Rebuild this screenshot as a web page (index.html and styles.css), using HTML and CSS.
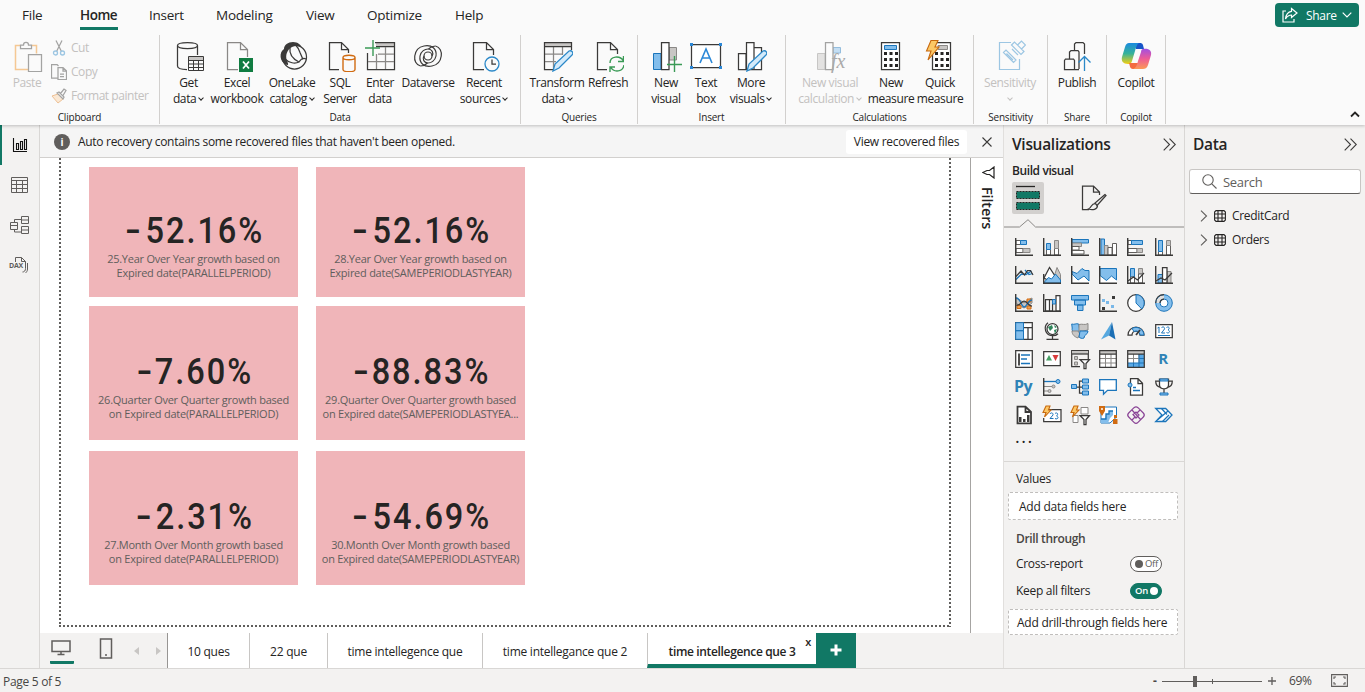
FILE: index.html
```html
<!DOCTYPE html>
<html lang="en">
<head>
<meta charset="utf-8">
<title>Report editor</title>
<link rel="stylesheet" href="styles.css">
</head>
<body>
<div class="app">
<header class="top">
  <nav class="menu">
    <span class="menu-item m-file">File</span>
    <span class="menu-item m-home active">Home</span>
    <span class="menu-item m-insert">Insert</span>
    <span class="menu-item m-model">Modeling</span>
    <span class="menu-item m-view">View</span>
    <span class="menu-item m-opt">Optimize</span>
    <span class="menu-item m-help">Help</span>
    <button class="share"><svg width="16" height="16" viewBox="0 0 16 16"><path d="M4 4H1v11h11v-3M9.500 1.500l5.500 4.500-5.500 4.500V8C6.500 8 5 9.500 3.500 12 4 7.500 6 4.700 9.500 4.300z"/></svg><span>Share</span><svg width="10" height="6" viewBox="0 0 10 6"><path d="M.700.700 5 5 9.300.700"/></svg></button>
  </nav>
  <div class="ribbon">
    <section class="group g-clip">
      <div class="items">
        <div class="item w34 off"><svg class="ic" viewBox="0 0 32 32"><path class="or" d="M9 5.500H4.500v24H17M21 5.500h4.500v8"/><path class="k" d="M9.500 8.500V5h3c0-3.500 5-3.500 5 0h3v3.500zM17.500 14.500h13v17h-13z"/></svg><span class="lb">Paste</span></div>
        <div class="smalls">
          <div class="small off"><svg width="16" height="16" viewBox="0 0 16 16"><path class="k" d="M5 .500l5.500 11M11 .500 5.500 11.500"/><circle class="bl" cx="4.500" cy="13" r="2"/><circle class="bl" cx="11.500" cy="13" r="2"/></svg>Cut</div>
          <div class="small off"><svg width="16" height="16" viewBox="0 0 16 16"><path class="k" d="M7 14H.500V.500H6L7.500 2M7 3.500h5l3.500 3.500v8.500H7zM12 3.500V7h3.500M9 10h4M9 12.500h4"/></svg>Copy</div>
          <div class="small off"><svg width="16" height="16" viewBox="0 0 16 16"><path class="orf" d="M1 8l6-2 5 5-5 4z"/><path class="k" d="M6 5l2-1 5 5-1 2zM9.500 5.500l3.500-4.500 2 1.500-3 5"/></svg>Format painter</div>
        </div>
      </div>
      <div class="gl">Clipboard</div>
    </section>
    <section class="group g-data">
      <div class="items">
        <div class="item w43"><svg class="ic" viewBox="0 0 32 32"><path class="k" d="M14 29.500C8 29.500 4.500 28 4.500 26V5.500c0-4 20-4 20 0V15M4.500 5.500c0 4 20 4 20 0"/><path class="gf" d="M16 17h14v3H16z"/><path class="k w1" d="M15.500 16.500h15v14h-15zM15.500 20.500h15M15.500 24h15M15.500 27.500h15M20.500 20v10M25.500 20v10"/></svg><span class="lb">Get<br>data <i class="chev"></i></span></div>
        <div class="item w54"><svg class="ic" viewBox="0 0 32 32"><path class="k gray" d="M17 29.500H6.500v-27h13l7 7V17M19.500 2.500v7h7"/><path fill="#107c41" d="M18 18h14v14H18z"/><path stroke="#fff" stroke-width="1.800" d="M22 21.500l6 7M28 21.500l-6 7"/></svg><span class="lb">Excel<br>workbook</span></div>
        <div class="item w56"><svg class="ic" viewBox="0 0 32 32"><path fill="#3b3a39" d="M17 2c-5 0-9 3-9 7-5 3-5 13 3 16 2 0 1-2 0-4-2-6 0-11 5-14 4-2 8-1 10 1C25 5 22 2 17 2z"/><circle class="k" cx="18.500" cy="17" r="12"/><path class="k" d="M14 8c-1 7 3 11 9 14 2-3 5-4 7-3M9 19c4 4 10 5 14 3M20 5.500c2 2 3 4 4 7l3 7"/></svg><span class="lb">OneLake<br>catalog <i class="chev"></i></span></div>
        <div class="item w40"><svg class="ic" viewBox="0 0 32 32"><path class="k" d="M15 29.500H5.500v-27h12l7 7V13M17.500 2.500v7h7"/><path class="sq" d="M19 17.500v12c0 3 12 3 12 0v-12c0 3-12 3-12 0c0-3 12-3 12 0"/></svg><span class="lb">SQL<br>Server</span></div>
        <div class="item w40"><svg class="ic" viewBox="0 0 32 32"><path class="gf" d="M12 2h18v4H12z"/><path class="k" d="M11 2.500h19.500v27h-27V13M12 6.500h18.500"/><path class="k gray" d="M4 21.500h26M14 14h16M12.500 14v15M21.500 7v22"/><path class="gr" d="M9 0v16M1 8h15"/></svg><span class="lb">Enter<br>data</span></div>
        <div class="item w56"><svg class="ic" viewBox="0 0 32 32"><path class="k dv" d="M8.500 26C-.500 24 1 8 12 6c8-1.500 13 3 12 10-1 5-5 7-8 7-4 0-6-4-4-7"/><path class="k dv" d="M23.500 6C32.500 8 31 24 20 26c-8 1.500-13-3-12-10 1-5 5-7 8-7 4 0 6 4 4 7"/><path class="k dv" d="M8.500 26c3 0 5-1 7-3M23.500 6c-3 0-5 1-7 3"/><circle class="k dv" cx="16" cy="16" r="4"/></svg><span class="lb">Dataverse</span></div>
        <div class="item w56"><svg class="ic" viewBox="0 0 32 32"><path class="k" d="M16 29.500H5.500v-27h13l7 7V15M18.500 2.500v7h7"/><circle class="bw" cx="24" cy="24" r="7"/><path class="k" d="M24 19.500V24h4"/></svg><span class="lb">Recent<br>sources <i class="chev"></i></span></div>
      </div>
      <div class="gl">Data</div>
    </section>
    <section class="group g-query">
      <div class="items">
        <div class="item w54"><svg class="ic" viewBox="0 0 32 32"><path class="gf" d="M3 2h27v4H3z"/><path class="k gray" d="M4 14h18M4 21.500h11M12.500 7v22M21.500 7v8"/><path class="k" d="M30.500 10V2.500h-27v27H13M3.500 6.500h27"/><path class="bw lb2" d="M12 31l2-7 14-13c3-1 5 2 3 4L18 28z"/></svg><span class="lb">Transform<br>data <i class="chev"></i></span></div>
        <div class="item w48"><svg class="ic" viewBox="0 0 32 32"><path class="k" d="M15 29.500H5.500v-27h13l7 7V14M18.500 2.500v7h7"/><path class="gr" d="M18 23c0-7 10-8 13.500-2M31.500 16v5.500H26M32 25c-1 7-10 8-13.500 2M18 32v-5h5"/></svg><span class="lb">Refresh</span></div>
      </div>
      <div class="gl">Queries</div>
    </section>
    <section class="group g-insert">
      <div class="items">
        <div class="item w40"><svg class="ic" viewBox="0 0 32 32"><path class="b" d="M3.500 13.500H11v16H3.500z"/><path class="g" d="M19 7.500h7.500V20H19z"/><path class="k wf" d="M11.500 2.500h7.500v27h-7.500z"/><path class="gr" d="M24.500 16v16M17 24.500h15"/></svg><span class="lb">New<br>visual</span></div>
        <div class="item w40"><svg class="ic" viewBox="0 0 32 32"><path class="k wf" d="M1.500 4.500h29v23h-29z"/><path fill="#2b88d8" d="M0 3h3v3H0zM29 3h3v3h-3zM0 26h3v3H0zM29 26h3v3h-3z"/><path class="bl A" d="M10 23 16 9l6 14M12.500 18h7"/></svg><span class="lb">Text<br>box</span></div>
        <div class="item w50"><svg class="ic" viewBox="0 0 32 32"><path class="k wf" d="M3.500 13.500H11v16H3.500zM19 7.500h7.500v22H19zM11.500 2.500h7.500v27h-7.500z"/><path class="bw lb2" d="M12 31l2-7 14-13c3-1 5 2 3 4L18 28z"/></svg><span class="lb">More<br>visuals <i class="chev"></i></span></div>
      </div>
      <div class="gl">Insert</div>
    </section>
    <section class="group g-calc">
      <div class="items">
        <div class="item w70 off"><svg class="ic" viewBox="0 0 32 32"><path class="g" d="M3.500 13.500H11v16H3.500z"/><path class="b" d="M19 7.500h7.500V13H19z"/><path class="k wf" d="M11.500 2.500h7.500v27h-7.500z"/></svg><em class="fx">fx</em><span class="lb">New visual<br>calculation <i class="chev"></i></span></div>
        <div class="item w52"><svg class="ic" viewBox="0 0 32 32"><path class="k wf" d="M6.500 2.500h18v27h-18z"/><path class="b" d="M9.500 5.500h12v4h-12z"/><path class="dots" d="M9 13.500h14M9 19.500h14M9 25.500h14"/></svg><span class="lb">New<br>measure</span></div>
        <div class="item w46"><svg class="ic" viewBox="0 0 32 32"><path class="k wf" d="M8.500 2.500h18v27h-18z"/><path class="g" d="M14 5.500h9.500v4H14z"/><path class="dots" d="M11 13.500h14M11 19.500h14M11 25.500h14"/><path class="bolt" d="M7 .500h7L11 7h4L4 20l3-9H2.500z"/></svg><span class="lb">Quick<br>measure</span></div>
      </div>
      <div class="gl">Calculations</div>
    </section>
    <section class="group g-sens">
      <div class="items">
        <div class="item w60 off"><svg class="ic sens" viewBox="0 0 32 32"><path class="bl sn" d="M17 2.500H5.500v27h20V19M9.500 12.500l2.500-2.500 10 10-2.500 2.500zM12.500 13.500l6.500 6.500M17.500 5l3-3 9.500 9.500-3 3zM18 9l6 6M23.500 5l4-4 4 4-4 4"/></svg><span class="lb">Sensitivity<br><i class="chev"></i></span></div>
      </div>
      <div class="gl">Sensitivity</div>
    </section>
    <section class="group g-share">
      <div class="items">
        <div class="item w58"><svg class="ic" viewBox="0 0 32 32"><path class="k" d="M18 29.500H3.500v-9l1-1.500h8l1 1.500v9M8.500 19v-7L10 10.500h7l1 1.500v17M13.500 10V4L15 2.500h7L23.500 4v10"/><path class="bl" d="M23.500 31V17M17.500 22.500l6-6 6 6"/></svg><span class="lb">Publish</span></div>
      </div>
      <div class="gl">Share</div>
    </section>
    <section class="group g-cop">
      <div class="items">
        <div class="item w58"><svg class="ic" viewBox="0 0 32 32"><defs><linearGradient id="c1" x1="0" y1="0" x2="0" y2="1"><stop offset="0" stop-color="#1a8ae0"/><stop offset=".5" stop-color="#35b29a"/><stop offset="1" stop-color="#f4cf12"/></linearGradient><linearGradient id="c2" x1="0" y1="0" x2="0" y2="1"><stop offset="0" stop-color="#a34fe0"/><stop offset=".5" stop-color="#ee5c95"/><stop offset="1" stop-color="#fb9a55"/></linearGradient></defs><path fill="#1755c8" d="M14 3h6c3 0 3 2 4 6h-8z"/><path fill="url(#c1)" d="M9 3h10c-2 1-3 4-4 8l-3 10c-1 3-2 3-4 3-5 0-7-3-6-7L5 7c1-3 2-4 4-4z"/><path fill="#f36b3f" d="M9 23h10l-3 6h-3c-3 0-3-3-4-6z"/><path fill="url(#c2)" d="M23 9c6-1 9 2 8 6l-3 10c-1 3-3 4-5 4H13c3-1 4-4 5-8l3-9c0-2 1-3 2-3z"/></svg><span class="lb">Copilot</span></div>
      </div>
      <div class="gl">Copilot</div>
    </section>
    <svg class="collapse" width="10" height="7" viewBox="0 0 10 7"><path d="M1 5.500 5 1.500l4 4"/></svg>
  </div>
</header>
<div class="main">
  <aside class="rail">
    <div class="rail-i sel"><svg width="16" height="16" viewBox="0 0 16 16"><path d="M1.500 1v13.500H15M4.500 6.500h2v6h-2zM8.500 4.500h2v8h-2zM12.500 2.500h2v10h-2z"/></svg></div>
    <div class="rail-i"><svg width="17" height="16" viewBox="0 0 17 16"><path d="M.500.500h16v15H.500zM.500 3.500h16M.500 7.500h16M.500 11.500h16M5.500 3.500v12M11.500 3.500v12"/></svg></div>
    <div class="rail-i"><svg width="19" height="19" viewBox="0 0 19 19"><path d="M.500 6.500h7v7h-7zM.500 9.500h7M11.500.500h7v7h-7zM11.500 4h7M11.500 10.500h7v7h-7zM11.500 14h7M4.500 6V3.500h7M4.500 13.500v2.500h7"/></svg></div>
    <div class="rail-i dax"><svg width="17" height="17" viewBox="0 0 17 17"><path d="M4.500 10V.500h6l4 4v7c0 2-1 3.500-3 3.500M10.500.500v4h4M16.500 6v6c0 2-1 3-2 4"/></svg><b>DAX</b></div>
  </aside>
  <div class="center">
    <div class="notice"><span class="info">i</span><span class="ntext">Auto recovery contains some recovered files that haven't been opened.</span><span class="nbtn">View recovered files</span><svg class="nx" width="10" height="10" viewBox="0 0 10 10"><path d="M.500.500l9 9M9.500.500l-9 9"/></svg></div>
    <div class="stage">
      <div class="canvas">
        <div class="page">
          <div class="card"><div class="num"><i>-</i>52.16%</div><p>25.Year Over Year growth based on<br>Expired date(PARALLELPERIOD)</p></div>
          <div class="card"><div class="num"><i>-</i>52.16%</div><p>28.Year Over Year growth based on<br>Expired date(SAMEPERIODLASTYEAR)</p></div>
          <div class="card low"><div class="num tight"><i>-</i>7.60%</div><p>26.Quarter Over Quarter growth based<br>on Expired date(PARALLELPERIOD)</p></div>
          <div class="card low"><div class="num tight"><i>-</i>88.83%</div><p>29.Quarter Over Quarter growth based<br>on Expired date(SAMEPERIODLASTYEA...</p></div>
          <div class="card low"><div class="num"><i>-</i>2.31%</div><p>27.Month Over Month growth based<br>on Expired date(PARALLELPERIOD)</p></div>
          <div class="card low"><div class="num"><i>-</i>54.69%</div><p>30.Month Over Month growth based<br>on Expired date(SAMEPERIODLASTYEAR)</p></div>
        </div>
      </div>
      <div class="filters"><svg width="13" height="13" viewBox="0 0 13 13"><path d="M12 1v11L7.500 8.500H5L.800 6.500 5 4.500h2.500z"/></svg><span>Filters</span></div>
    </div>
    <div class="tabs">
      <div class="views">
        <div class="desk"><svg width="20" height="16" viewBox="0 0 20 16"><path d="M1 1h18v10.500H1zM10 12v2.500M6.500 14.500h7"/></svg></div>
        <svg class="phone" width="14" height="21" viewBox="0 0 14 21"><path d="M1.500 1h11v19h-11zM6 17h2"/></svg>
        <svg class="ar1" width="5" height="8" viewBox="0 0 5 8"><path d="M5 0v8L0 4z"/></svg>
        <svg class="ar2" width="5" height="8" viewBox="0 0 5 8"><path d="M0 0v8l5-4z"/></svg>
      </div>
      <div class="tab t1">10 ques</div><div class="tab t2">22 que</div><div class="tab t3">time intellegence que</div><div class="tab t4">time intellegance que 2</div><div class="tab t5 cur">time intellegence que 3<span class="tx">x</span></div><div class="plus"><svg width="12" height="12" viewBox="0 0 12 12"><path d="M6 .500v11M.500 6h11"/></svg></div>
    </div>
  </div>
  <aside class="viz">
    <div class="ph"><h2>Visualizations</h2><svg width="13" height="13" viewBox="0 0 13 13"><path d="M.700.700l5.800 5.800-5.800 5.800M6.500.700l5.800 5.800-5.800 5.800"/></svg></div>
    <div class="bv">Build visual</div>
    <div class="modes">
      <div class="mode on"><svg width="24" height="26" viewBox="0 0 24 26"><path stroke="#252423" stroke-width="1.300" d="M0 1.500h19"/><path fill="#117865" stroke="#252423" stroke-dasharray="2 1" d="M.500 6.500h23v7H.500zM.500 17.500h23v7H.500z"/></svg></div>
      <svg class="fmt" width="26" height="26" viewBox="0 0 26 26"><path class="k" d="M8 24.500H1.500V1h11l6 6v3M12.500 1v6h6M24 9.500 14 18l2 2.500 9-10z"/><path class="k" d="M14 18.500c-4 0-3 4-6.500 5.500 4 1.500 9 .500 9-3.500"/></svg>
    </div>
    <svg class="caret" width="180" height="9" viewBox="0 0 180 9"><path d="M0 8h15.500L24 .700 31.500 8H180"/></svg>
    <div class="gallery">
      <svg viewBox="0 0 18 18"><path class="wr" d="M1 2.500h4.500v4H1zM1 10.500h7v4H1z"/><path class="b" d="M5.500 2.500h6v4h-6z"/><path class="g" d="M8 10.500h7v4H8z"/><path class="x" d="M.700 0v17.300H18"/></svg>
      <svg viewBox="0 0 18 18"><path class="wr" d="M3.500 11.500h4V17h-4zM11.500 10.500h4V17h-4z"/><path class="b" d="M3.500 5.500h4v6h-4z"/><path class="g" d="M11.500 2.500h4v8h-4z"/><path class="x" d="M.700 0v17.300H18"/></svg>
      <svg viewBox="0 0 18 18"><path class="b" d="M1 1.500h16.500V5H1z"/><path class="g" d="M1 5h9.500v3.500H1z"/><path class="wr" d="M1 8.500h7V12H1zM1 12.500h12V16H1z"/><path class="x" d="M.700 0v17.300H18"/></svg>
      <svg viewBox="0 0 18 18"><path class="b" d="M2 1h3.500v16H2z"/><path class="g" d="M5.500 7.500H9V17H5.500z"/><path class="wr" d="M9 9.500h4V17H9zM13.500 5.500h4V17h-4z"/><path class="x" d="M.700 0v17.300H18"/></svg>
      <svg viewBox="0 0 18 18"><path class="wr" d="M1 2.500h4.500v4H1zM1 10.500h9v4H1z"/><path class="b" d="M4.500 2.500h11v4h-11z"/><path class="g" d="M10 10.500h5.500v4H10z"/><path class="x" d="M.700 0v17.300H18"/></svg>
      <svg viewBox="0 0 18 18"><path class="wr" d="M3.500 13.500h4V17h-4zM11.500 7.500h4V17h-4z"/><path class="b" d="M3.500 2.500h4v11h-4z"/><path class="g" d="M11.500 2.500h4v5h-4z"/><path class="x" d="M.700 0v17.300H18"/></svg>

      <svg viewBox="0 0 18 18"><path class="bs" d="M1 13.500 6.500 8l4.500.500L16.500 5"/><path class="bs" d="m10 4 4 4.500 3.500-1"/><path class="k" d="M1 10.500 6 5l3.500 4 3-4.500h3L18 9"/><path class="x" d="M.700 0v17.300H18"/></svg>
      <svg viewBox="0 0 18 18"><path class="g" d="M10 14 14 1.500l3.500 7v8.500z"/><path class="k wf" d="M1 12 6.500 1.500 12 10l-4 6z"/><path class="b" d="m1 16.500 4.500-5 3 1.500 4-5 5 6v3H1z"/><path class="x" d="M.700 8v9.300H18"/></svg>
      <svg viewBox="0 0 18 18"><path class="wf" d="M1 9l6 5 5-4 6 6v1H1z"/><path class="b" d="m1 5.500 5 2 5-5 3 2h4V15l-5-5-6 4-6-6z"/><path class="x" d="M.700 0v17.300H18"/></svg>
      <svg viewBox="0 0 18 18"><path class="wf" d="M1 9l6 5 5-4 6 4v3H1z"/><path class="b" d="M1 2.500h16.500V14l-5-4-5 4.500L1 9.500z"/><path class="x" d="M.700 0v17.300H18"/></svg>
      <svg viewBox="0 0 18 18"><path class="b" d="M3.500 2.500h4V11h-4z"/><path class="g" d="M11.500 2.500h4V8h-4z"/><path class="wr" d="M3.500 11h4v6h-4zM11.500 8h4v9h-4z"/><path class="k" d="m1 15 5.500-4 4 3L17 7"/><path class="x" d="M.700 0v17.300H18"/></svg>
      <svg viewBox="0 0 18 18"><path class="b" d="M3 8.500h4.500V17H3z"/><path class="g" d="M12 5.500h4V17h-4z"/><path class="k wf" d="M7.500 1.500h4.500V17H7.500z"/><path class="k" d="m1 15 5-3 4 2 7-7"/><path class="x" d="M.700 0v17.300H18"/></svg>

      <svg viewBox="0 0 18 18"><path class="g" d="m1 4 4 2 4 3 4-3 4-2v5l-4 3-4 2-4-2-4-3z"/><path class="oro" d="M2 11.500h4v3H2zM12 5h4v3h-4zM12 12h4v3h-4z"/><path class="bs w2" d="M1 4c5 0 5 9 8 9s4-7 8-7"/><path class="k" d="M1 11c5 1 5-4 8-4s4 5 8 5"/><path class="x" d="M.700 0v17.300H18"/></svg>
      <svg viewBox="0 0 18 18"><path class="k wf" d="M2.500 5.500h4V17h-4zM6.500 5.500h3V17h-3zM13 1.500h4V17h-4z"/><path class="b" d="M9.500 5.500h3V10h-3z"/><path class="x" d="M.700 0v17.300H18"/></svg>
      <svg viewBox="0 0 18 18"><path class="b" d="M.500 1.500h17V6H.500zM3.500 6h11v5h-11zM6.500 11h5.500v5.500H6.500z"/></svg>
      <svg viewBox="0 0 18 18"><path fill="#7ab8e8" d="M7 7h3v3H7zM3 5h3v3H3zM12 11h3v3h-3z"/><path fill="#3b3a39" d="M13 2h3v3h-3zM3 13h3v3H3z"/><path class="x" d="M.700 0v17.300H18"/></svg>
      <svg viewBox="0 0 18 18"><circle class="k wf" cx="9" cy="9" r="8.300"/><path class="b" d="M9 .700V9l5.800 6C20 9 16 .700 9 .700z"/></svg>
      <svg viewBox="0 0 18 18"><circle class="ring" cx="9" cy="9" r="6.200"/><path class="gw" d="M2.800 9c0-3 3-6.200 6.200-6.200"/><circle class="bs w1" cx="9" cy="9" r="8.300"/><circle class="bs w1 wf" cx="9" cy="9" r="4"/><path class="k" d="M.700 9C.700 4 4 .700 9 .700M5 9c0-2 2-4 4-4"/></svg>

      <svg viewBox="0 0 18 18"><path class="k wf" d="M.700.700h16.600v16.600H.700zM9 5.500h8M13 5.500V17"/><path class="b" d="M.700.700H8.500v8H.700zM.700 8.700H8.500v8.600H.700z"/></svg>
      <svg viewBox="0 0 18 18"><circle class="k wf" cx="9.500" cy="7" r="5.500"/><path fill="#2f855a" d="M5 5l4-2 1 3-3 3zM11 8l3-1-2 5zM11 3l3 2-2 1z"/><path class="k" d="M5 .700c-5 4-3 13 5 13 2 0 4-1 5-2M9.500 14v3M3.500 17.300h12"/></svg>
      <svg viewBox="0 0 18 18"><path class="b" d="M.700 2c3 1 4-1 7 0l1 6-4 4c-3-1-4-4-3.500-6z"/><path class="g" d="M8 2.500c3-1 6 1 9-1V8l-5 1H8z"/><path class="g" d="M1 9h6l2 3-2 4c-3-1-6-3-6-7z"/><path class="b" d="M9 9h8c0 4-4 3-4 7-2 1-4 0-5-1z"/></svg>
      <svg viewBox="0 0 18 18"><path fill="#56a8df" d="M13 0 2 17.500l8-4z"/><path fill="#1b6fb5" d="m13 0 3.500 17.500L10 13.500z"/></svg>
      <svg viewBox="0 0 18 18"><path class="k wf" d="M1 13a8 8 0 0 1 16 0h-4a4 4 0 0 0-8 0z"/><path class="b" d="M5 6.500A8 8 0 0 1 17 13h-4a4 4 0 0 0-6-3.500z"/><path class="k w2" d="M9 13l4-5"/></svg>
      <svg viewBox="0 0 18 18"><path class="k wf" d="M.700 2.500h16.600v13H.700z"/><path class="bs w1" d="m2.500 6 1.500-1v6M6.500 6c1-2 3.500-1 3 1l-3 4H10M11.500 5.500c2-1.500 4 .500 1.500 2.500 3 1 1 4-1.500 2.500M3 13.500h12"/></svg>

      <svg viewBox="0 0 18 18"><path class="k wf" d="M.700.700h16.600v16.600H.700z"/><path class="k w2" d="M4 3.500v12"/><path class="bs w2" d="M6 5h9M6 9h6M6 13.500h9"/></svg>
      <svg viewBox="0 0 18 18"><path class="k wf" d="M.700 1.700h16.600v14H.700z"/><path fill="#47a064" d="M6 5l3 5.500H3z"/><path fill="#d83b3b" d="M9.500 5h6l-3 6z"/></svg>
      <svg viewBox="0 0 18 18"><path class="k" d="M9 16.500H.700V.700h16.600V9"/><path class="gf" d="M1 1h16v3H1z"/><path class="g" d="M3.500 6.500h3v3h-3zM3.500 12h3v3h-3z"/><path class="k wf" d="M9 9.500h9.500l-3.500 4v5h-2v-5z"/><path class="k" d="M1 4h16"/></svg>
      <svg viewBox="0 0 18 18"><path class="wf" d="M1 1h16v16H1z"/><path class="gf" d="M1 1h16v3H1z"/><path class="gry" d="M6.500 4v13M12 4v13M1 8.500h16M1 13h16"/><path class="k" d="M.700.700h16.600v16.600H.700zM1 4h16"/></svg>
      <svg viewBox="0 0 18 18"><path class="wf" d="M1 1h16v16H1z"/><path class="gf" d="M1 1h16v3H1z"/><path fill="#5aa9e6" d="M12 4h5v13H1v-4h11z"/><path class="gry" d="M6.500 4v9M12 4v9M1 8.500h16"/><path class="bs w1" d="M12 4v13M6.500 13v4M1 13h16M12 8.500h5"/><path class="k" d="M.700.700h16.600v16.600H.700zM1 4h16"/></svg>
      <span class="letter">R</span>

      <span class="letter py">Py</span>
      <svg viewBox="0 0 18 18"><path class="bs" d="M1 3.500h12"/><path class="gry" d="M1 8.500h8M1 13h4"/><circle class="b" cx="15" cy="3.500" r="2"/><circle class="g" cx="10.500" cy="8.500" r="1.500"/><circle class="g" cx="6.500" cy="13" r="1.500"/><path class="x" d="M.700 0v17.300H18"/></svg>
      <svg viewBox="0 0 18 18"><path class="k" d="M5 9h6M8.500 9V3H11M8.500 9v6H11"/><path class="b" d="M.500 6.500h5v4h-5zM11.500 1h6v4h-6zM11.500 7h6v4h-6zM11.500 13h6v4h-6z"/></svg>
      <svg viewBox="0 0 18 18"><path class="bs wf" d="M.700 1.700h16.600v10.600H8.500l-4 4v-4H.700z"/></svg>
      <svg viewBox="0 0 18 18"><path class="k wf" d="M3.500 5V.700h7.500l4.500 4.500v12h-12V9M11 1v4.500h4"/><circle class="b" cx="3" cy="7" r="2"/><path class="bs" d="M6 9.500h3M6 12.500h7"/></svg>
      <svg viewBox="0 0 18 18"><path class="k" d="M4.500 3H.700c0 4 2 6 5 6M13.500 3h3.800c0 4-2 6-5 6"/><path class="k wf" d="M4.500 1h9v6c0 5-9 5-9 0zM9 11v5"/><path class="b" d="M5 1h8v2H5zM5 15h8v2H5z"/></svg>

      <svg viewBox="0 0 18 18"><path class="k wf w2" d="M2.500.700h8L16 6v11.300H2.500zM10.500 1v5H16"/><path fill="#3b3a39" d="M4 11h2.500v5H4zM8 13h2.500v3H8zM12 9h2.500v7H12z"/></svg>
      <svg viewBox="0 0 18 18"><path class="k wf" d="M3 3.500h15v12H.700V12"/><path class="bs w1" d="M7 8c1-2 3.500-1 3 1l-3 3.500h3.500M12 7.500c2-1.500 4 .500 1.500 2.500 3 1 1 4-1.500 2.500"/><path class="bolt" d="M3 0h4L5.500 4H8L1.500 11 3 6.500H0z"/></svg>
      <svg viewBox="0 0 18 18"><path class="g wf" d="M2 9.500h5v7H2zM10 1.500h7V8h-7z"/><path class="k wf" d="M9 9.500h9.500l-3.500 4v5h-2v-5z"/><path class="bolt" d="M3 0h4L5.500 4H8L1.500 11 3 6.500H0z"/></svg>
      <svg viewBox="0 0 18 18"><path class="b wf" d="M2 1h15.500v10L11 17H2z"/><path fill="#83beec" d="M10 5h4v4l-3 3-2 5H2v-4h4l1-5h3z"/><path class="bs" d="M14 5h-4v3H7v5H2"/><path fill="#d06b12" d="M0 0h6v5l-3 5-3-5zM14 13h4.500v5H14zM15 9h3v3h-3z"/><circle cx="3" cy="3" r="1" fill="#fff"/></svg>
      <svg viewBox="0 0 18 18"><path class="pu" d="M7 1.700Q9 0 11 1.700L16.300 7q2 2 0 4L11 16.300q-2 2-4 0L1.700 11q-2-2 0-4zM5 4l8.500 9.500M13 4l-3 3M8 11l-3 3M6 8.500 9 6l3 3-3 3z"/></svg>
      <svg viewBox="0 0 18 18"><path class="bs wf" d="M.700 2.500h10L17 9l-6.300 6.500h-10L7 9z"/><path class="bs" d="M6.500 2.500 12 8.500M3 13.500 13 5M7.500 15.500 14 9"/></svg>
    </div>
    <div class="more">...</div>
    <div class="wells">
      <div class="wl">Values</div>
      <div class="drop d1">Add data fields here</div>
      <div class="wl strong">Drill through</div>
      <div class="trow"><span>Cross-report</span><span class="tog"><i></i>Off</span></div>
      <div class="trow r2"><span>Keep all filters</span><span class="tog on">On<i></i></span></div>
      <div class="drop d2">Add drill-through fields here</div>
    </div>
  </aside>
  <aside class="data">
    <div class="ph"><h2>Data</h2><svg width="13" height="13" viewBox="0 0 13 13"><path d="M.700.700l5.800 5.800-5.800 5.800M6.500.700l5.800 5.800-5.800 5.800"/></svg></div>
    <div class="search"><svg width="15" height="15" viewBox="0 0 15 15"><circle cx="6" cy="6" r="5.200"/><path d="m9.800 9.800 4.700 4.700"/></svg><span>Search</span></div>
    <div class="field"><svg class="fc" width="8" height="12" viewBox="0 0 8 12"><path d="M1 .700 6.500 6 1 11.300"/></svg><svg width="12" height="12" viewBox="0 0 12 12"><path d="M2 .600h8L11.400 2v8L10 11.400H2L.600 10V2zM.600 4h10.800M.600 8h10.800M4 .600v10.800M8 .600v10.800"/></svg><span>CreditCard</span></div>
    <div class="field"><svg class="fc" width="8" height="12" viewBox="0 0 8 12"><path d="M1 .700 6.500 6 1 11.300"/></svg><svg width="12" height="12" viewBox="0 0 12 12"><path d="M2 .600h8L11.400 2v8L10 11.400H2L.600 10V2zM.600 4h10.800M.600 8h10.800M4 .600v10.800M8 .600v10.800"/></svg><span>Orders</span></div>
  </aside>
</div>
<footer class="status">
  <span class="pg">Page 5 of 5</span>
  <span class="zm">-</span>
  <svg class="slider" width="100" height="12" viewBox="0 0 100 12"><path stroke="#605e5c" d="M0 6.500h100M50.500 4v5"/><path fill="#605e5c" d="M31 1h4v11h-4z"/></svg>
  <svg class="zp" width="8" height="8" viewBox="0 0 8 8"><path d="M4 0v8M0 4h8"/></svg>
  <span class="pct">69%</span>
  <svg class="fit" width="17" height="13" viewBox="0 0 17 13"><path d="M.600.600h15.800v11.800H.600zM3 5V3h2M12 3h2v2M14 8v2h-2M5 10H3V8"/></svg>
</footer>
</div>
</body>
</html>
```
FILE: styles.css
```css
* { box-sizing: border-box; }
body { margin: 0; font: 12px/16px "Open Sans", "Noto Sans", sans-serif; color: #252423; letter-spacing: -0.3px; }
svg { display: block; fill: none; flex: none; }
.app { width: 1365px; height: 692px; display: flex; flex-direction: column; overflow: hidden; background: #f3f2f1; }

/* menu and ribbon */
.top { height: 125px; background: #fafafa; box-shadow: 0 1px 3px rgba(0,0,0,.22); position: relative; z-index: 2; }
.menu { height: 34px; display: flex; padding-left: 22px; font-size: 13.5px; line-height: 31px; letter-spacing: -.25px; }
.menu-item { white-space: nowrap; height: 30px; }
.m-file { width: 58px; }
.m-home { width: 38px; margin-right: 31px; }
.m-insert { width: 67px; }
.m-model { width: 90px; }
.m-view { width: 61px; }
.m-opt { width: 88px; }
.menu-item.active { font-weight: 600; letter-spacing: -.5px; border-bottom: 3px solid #117865; }
.share { margin: 3px 6px 0 auto; width: 84px; height: 24px; border: 0; border-radius: 4px; background: #117865; color: #fff; display: flex; align-items: center; gap: 8px; padding: 0 7px; font: 600 12px "Open Sans", sans-serif; letter-spacing: -.3px; }
.share svg { stroke: #fff; stroke-width: 1.2; }
.share svg:last-child { margin-left: -3px; }
.share span { font-weight: 400; }
.ribbon { display: flex; height: 90px; position: relative; }
.group { height: 89px; margin-top: 1px; border-right: 1px solid #d2d0ce; display: flex; flex-direction: column; }
.items { display: flex; padding-top: 5px; height: 75px; }
.gl { text-align: center; font-size: 10px; line-height: 14px; padding-top: 2px; letter-spacing: -.2px; }
.g-clip { width: 160px; } .g-clip .items { padding-left: 10px; }
.g-data { width: 361px; } .g-data .items { padding-left: 7px; }
.g-query { width: 117px; } .g-query .items { padding-left: 9px; }
.g-insert { width: 148px; } .g-insert .items { padding-left: 8px; }
.g-calc { width: 188px; } .g-calc .items { padding-left: 9px; }
.g-sens { width: 74px; } .g-sens .items { padding-left: 6px; }
.g-share, .g-cop { width: 59px; }
.item { display: flex; flex-direction: column; align-items: center; position: relative; }
.w34 { width: 34px; } .w40 { width: 40px; } .w43 { width: 43px; } .w46 { width: 46px; } .w48 { width: 48px; } .w50 { width: 50px; } .w52 { width: 52px; } .w54 { width: 54px; } .w56 { width: 56px; } .w58 { width: 58px; } .w60 { width: 60px; } .w70 { width: 70px; }
.ic { width: 32px; height: 32px; }
.lb { margin-top: 3px; text-align: center; white-space: nowrap; font-size: 12px; line-height: 16px; letter-spacing: -.38px; }
.chev { display: inline-block; width: 4px; height: 4px; border: solid currentColor; border-width: 0 1.3px 1.3px 0; transform: rotate(45deg); margin: 0 1px 3px 0; }
.off { color: #c3c1bf; }
.off > svg { opacity: .45; }
.smalls { display: flex; flex-direction: column; padding-left: 7px; margin-top: -4px; }
.small { display: flex; align-items: center; gap: 4px; height: 24px; white-space: nowrap; letter-spacing: -.45px; }
.collapse { position: absolute; right: 5px; bottom: 6px; stroke: #252423; stroke-width: 1.8; }
.fx { position: absolute; left: 36px; top: 9px; font: italic 20px/24px "Liberation Serif", serif; color: #aaa; letter-spacing: 0; }

/* shared icon strokes */
.k, .x { stroke: #3b3a39; stroke-width: 1.25; }
.x { stroke-width: 1.4; }
.w1 { stroke-width: 1; }
.w2 { stroke-width: 1.8; }
.gray { stroke: #8a8886; }
.wf { fill: #fff; }
.wr { fill: #fff; stroke: #605e5c; }
.gf { fill: #c8c6c4; }
.g { fill: #c8c6c4; stroke: #8a8886; }
.g.wf { fill: #fff; }
.gry { stroke: #8a8886; }
.b { fill: #83beec; stroke: #1b75bb; }
.b.wf { fill: #fff; }
.bl, .bs { stroke: #2b88c8; stroke-width: 1.3; }
.bs { stroke: #1b75bb; }
.bs.w1 { stroke-width: 1; }
.sn { stroke-width: 1.2; }
.A { stroke: #2b88d8; stroke-width: 1.6; }
.bw { stroke: #2b88c8; stroke-width: 1.3; fill: #fafafa; }
.lb2 { fill: #d3eafa; }
.gr { stroke: #3a9a56; stroke-width: 1.4; }
.or { stroke: #f08c1a; stroke-width: 1.5; }
.orf { stroke: #e07b1a; fill: #fbd4a8; }
.oro { stroke: #d06b12; fill: #f0a050; }
.sq { stroke: #d06b12; stroke-width: 1.4; fill: #fafafa; }
.dv { stroke-width: 1.2; }
.dots { stroke: #252423; stroke-width: 3; stroke-dasharray: 3 2.5; }
.bolt { fill: #fcc866; stroke: #c8690e; stroke-width: 1.1; }
.ring { stroke: #83beec; stroke-width: 4; }
.gw { stroke: #e1dfdd; stroke-width: 4; }
.pu { stroke: #8a4496; stroke-width: 1.2; }

/* body */
.main { display: flex; height: 543px; }
.rail { width: 40px; border-right: 1px solid #d9d7d5; }
.rail-i { height: 40px; display: flex; align-items: center; justify-content: center; position: relative; }
.rail-i svg { stroke: #605e5c; stroke-width: 1; }
.rail-i.sel { border-left: 2px solid #117865; padding-right: 2px; }
.rail-i.sel svg { stroke: #111; stroke-width: 1.1; }
.dax b { position: absolute; left: 9px; top: 17px; font: 700 7px/8px "Open Sans", sans-serif; color: #605e5c; background: #f3f2f1; letter-spacing: -.3px; }
.center { width: 964px; display: flex; flex-direction: column; border-right: 1px solid #e1dfdd; }
.notice { height: 33px; background: #f5f5f5; border-bottom: 1px solid #d2d0ce; display: flex; align-items: center; padding: 1px 11px 0 14px; }
.info { width: 16px; height: 16px; border-radius: 50%; background: #605e5c; color: #fff; font: 700 10px/16px "Open Sans", sans-serif; text-align: center; margin-right: 8px; }
.nbtn { margin-left: auto; width: 121px; height: 24px; background: #fff; border-radius: 3px; line-height: 24px; text-align: center; margin-right: 15px; }
.stage { display: flex; height: 475px; background: #fff; }
.canvas { flex: none; width: 931px; padding: 0 19px; border-right: 1px solid #a6a4a2; }
.page { height: 469px; padding: 9px 0 0 30px; display: grid; grid-template-columns: 209px 209px; grid-template-rows: 130px 134px 134px; column-gap: 18px;
  background: repeating-linear-gradient(180deg, #605e5c 0 2px, transparent 2px 4px) 0 0 / 2px 100% no-repeat, repeating-linear-gradient(180deg, #605e5c 0 2px, transparent 2px 4px) 100% 0 / 2px 100% no-repeat, repeating-linear-gradient(90deg, #605e5c 0 2px, transparent 2px 4px) 0 100% / 100% 2px no-repeat; }
.card { background: #f0b5b9; text-align: center; padding-top: 44px; height: 130px; }
.card.low { margin-top: 9px; height: 134px; padding-top: 46px; }
.card.low:nth-child(n+5) { margin-top: 20px; }
.num { font: 500 37px/40px Roboto, sans-serif; letter-spacing: 2.2px; transform: scaleX(.88); white-space: nowrap; padding-left: 6px; }
.num i { font-style: normal; display: inline-block; transform: scaleX(1.4); margin-right: 5px; }
.num.tight i { margin-right: 3px; }
.card p { margin: 1px 0 0; font-size: 11px; line-height: 14px; color: #605e5c; white-space: nowrap; letter-spacing: -.25px; }
.card.low p { margin-top: 1px; }
.filters { flex: none; width: 32px; display: flex; flex-direction: column; align-items: center; padding: 8px 0 0 3px; gap: 8px; }
.filters svg { stroke: #252423; stroke-width: 1.2; }
.filters span { writing-mode: vertical-rl; font-weight: 600; font-size: 14.5px; line-height: 18px; letter-spacing: -.15px; margin-right: 4px; }
.tabs { height: 35px; display: flex; letter-spacing: -.25px; }
.views { width: 127px; display: flex; padding-left: 10px; }
.views svg { stroke: #605e5c; stroke-width: 1.5; }
.desk { width: 24px; height: 31px; border-bottom: 3px solid #117865; padding: 7px 0 0 1px; border-radius: 1px; }
.phone { margin: 5px 0 0 25px; }
.views .ar1, .views .ar2 { fill: #c8c6c4; stroke: none; margin: 14px 0 0 21px; }
.views .ar2 { margin-left: 17px; }
.tab { background: #fff; border-left: 1px solid #c8c6c4; height: 35px; line-height: 37px; text-align: center; position: relative; }
.t1 { width: 82px; border-color: #979593; } .t2 { width: 78px; } .t3 { width: 155px; } .t4 { width: 165px; } .t5 { width: 169px; }
.cur { font-weight: 600; border-bottom: 4px solid #117865; letter-spacing: -.35px; }
.tx { position: absolute; right: 5px; top: 2px; font-size: 11px; line-height: 14px; }
.plus { width: 40px; height: 35px; background: #117865; display: flex; align-items: center; justify-content: center; }
.plus svg { stroke: #fff; stroke-width: 3; margin-top: -2px; }

/* side panes */
.viz { width: 181px; border-right: 1px solid #d9d7d5; }
.data { width: 180px; }
.ph { display: flex; align-items: center; justify-content: space-between; padding: 0 8px; height: 38px; }
.data .ph { padding-right: 8px; }
.ph h2 { margin: 0; font-size: 15.5px; font-weight: 600; letter-spacing: -.3px; }
.ph svg, .nx { stroke: #3b3a39; stroke-width: 1.1; }
.bv { padding-left: 8px; font-weight: 600; height: 19px; letter-spacing: -.4px; }
.modes { display: flex; padding-left: 8px; height: 37px; gap: 37px; }
.mode { width: 32px; height: 32px; background: #d2d0ce; border-radius: 2px; padding: 3px 4px; }
.fmt { margin-top: 3px; }
.caret { stroke: #8a8886; }
.gallery { display: grid; grid-template-columns: repeat(6, 18px); grid-auto-rows: 18px; gap: 10px; padding: 10px 0 0 11px; }
.gallery svg { width: 18px; height: 18px; overflow: visible; }
.letter { font-weight: 700; font-size: 15px; line-height: 17px; color: #2f83b7; text-align: center; margin-left: -2px; }
.py { font-size: 16px; letter-spacing: -.5px; }
.more { height: 37px; padding-left: 11px; font-size: 18px; line-height: 24px; letter-spacing: 1.5px; }
.wells { border-top: 1px solid #d9d7d5; padding: 9px 6px 0 4px; }
.wl { padding-left: 8px; height: 21px; }
.strong { font-weight: 600; color: #484644; margin-top: 11px; height: 16px; letter-spacing: -.35px; }
.drop { background: #fff; border: 1px dashed #c0bebc; border-radius: 2px; padding-left: 10px; letter-spacing: -.25px; }
.d1 { height: 28px; line-height: 27px; }
.d2 { height: 26px; line-height: 25px; margin-top: 10px; padding-left: 8px; white-space: nowrap; }
.trow { display: flex; justify-content: space-between; align-items: center; padding: 0 16px 0 8px; margin-top: 9px; height: 16px; }
.r2 { margin-top: 11px; }
.tog { width: 32px; height: 16px; border: 1px solid #605e5c; background: #fff; border-radius: 8px; display: flex; align-items: center; gap: 2px; padding-left: 4px; font-size: 9.5px; line-height: 14px; color: #605e5c; }
.tog i { width: 8px; height: 8px; border-radius: 50%; background: #605e5c; }
.tog.on { background: #117865; border-color: #117865; color: #fff; font-weight: 600; }
.tog.on i { background: #fff; }
.search { margin: 6px 4px 10px; height: 25px; background: #fff; border: 1px solid #c8c6c4; border-bottom-color: #605e5c; border-radius: 3px; display: flex; align-items: center; gap: 6px; padding-left: 12px; font-size: 13px; color: #605e5c; }
.search svg { stroke: #605e5c; stroke-width: 1.1; }
.field { height: 24px; display: flex; align-items: center; padding-left: 15px; }
.field svg { stroke: #252423; stroke-width: 1.1; margin-right: 6px; }
.field .fc { stroke: #605e5c; }

.status { height: 24px; border-top: 1px solid #d9d7d5; display: flex; align-items: center; padding-left: 3px; color: #484644; }
.pg { padding-top: 3px; }
.zm { margin-left: auto; font-weight: 700; width: 9px; }
.slider { margin-right: 6px; }
.zp { stroke: #605e5c; stroke-width: 1.3; margin-right: 13px; }
.pct { width: 42px; }
.fit { stroke: #605e5c; margin-right: 17px; stroke-width: 1.1; }
```
